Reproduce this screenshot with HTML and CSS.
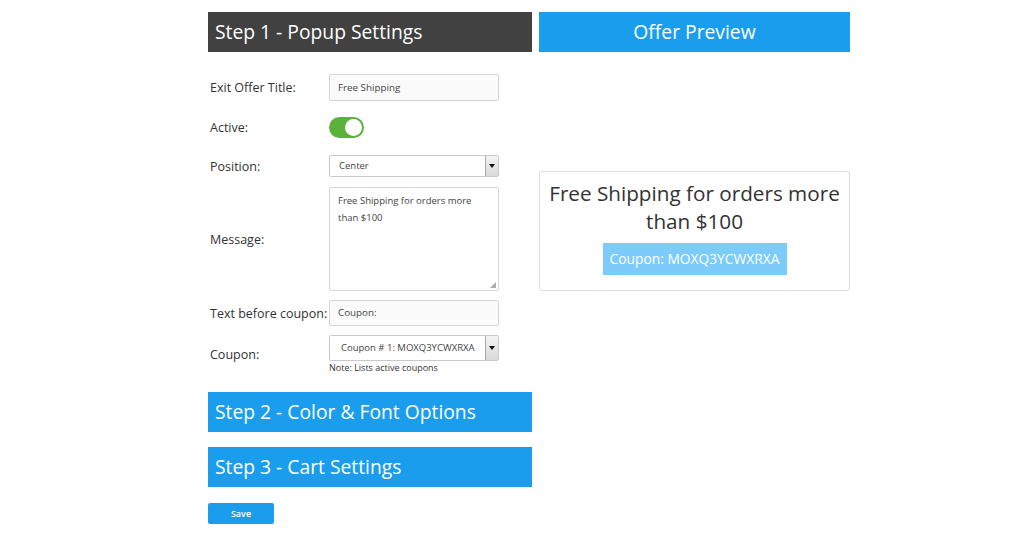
FILE: index.html
```html
<!DOCTYPE html>
<html>
<head>
<meta charset="utf-8">
<link rel="stylesheet" href="styles.css">
</head>
<body>
<div class="page">
  <div class="left">
    <div class="step dark">Step 1 - Popup Settings</div>
    <div class="form">
      <div class="row r1">
        <label class="lbl">Exit Offer Title:</label>
        <div class="input">Free Shipping</div>
      </div>
      <div class="row r2">
        <label class="lbl">Active:</label>
        <div class="toggle"><span class="knob"></span></div>
      </div>
      <div class="row r3">
        <label class="lbl">Position:</label>
        <div class="select"><span class="sel-text">Center</span><span class="arrow"><span class="tri"></span></span></div>
      </div>
      <div class="row r4">
        <label class="lbl">Message:</label>
        <div class="textarea">Free Shipping for orders more than $100<span class="grip"></span></div>
      </div>
      <div class="row r5">
        <label class="lbl">Text before coupon:</label>
        <div class="input">Coupon:</div>
      </div>
      <div class="row r6">
        <label class="lbl">Coupon:</label>
        <div class="ctl">
          <div class="select tall"><span class="sel-text pad">Coupon # 1: MOXQ3YCWXRXA</span><span class="arrow"><span class="tri"></span></span></div>
          <div class="note">Note: Lists active coupons</div>
        </div>
      </div>
    </div>
    <div class="step blue s2">Step 2 - Color &amp; Font Options</div>
    <div class="step blue s3">Step 3 - Cart Settings</div>
    <button class="save">Save</button>
  </div>
  <div class="right">
    <div class="step blue center">Offer Preview</div>
    <div class="preview">
      <div class="ptext">Free Shipping for orders more than $100</div>
      <div class="coupon">Coupon: MOXQ3YCWXRXA</div>
    </div>
  </div>
</div>
</body>
</html>
```

FILE: styles.css
```css
* { box-sizing: border-box; }
body {
  margin: 0;
  background: #fff;
  font-family: "Open Sans", "Noto Sans", sans-serif;
  color: #333;
}
.page {
  display: flex;
  gap: 7px;
  padding: 12px 0 0 208px;
}
.left { width: 324px; display: flex; flex-direction: column; }
.right { width: 311px; display: flex; flex-direction: column; }

.step {
  height: 40px;
  line-height: 40px;
  padding-left: 7px;
  font-size: 19.3px;
  color: #fff;
  white-space: nowrap;
}
.step.dark { background: #414141; }
.step.blue { background: #1b9ded; }
.step.center { text-align: center; padding-left: 0; }
.s2 { margin-top: 18px; }
.s3 { margin-top: 15px; }

.form { display: flex; flex-direction: column; padding-top: 22px; }
.row { display: flex; align-items: center; }
.r2 { margin-top: 16px; }
.r3 { margin-top: 17px; }
.r4 { margin-top: 10px; }
.r5 { margin-top: 9px; }
.r6 { margin-top: 9px; align-items: flex-start; }
.lbl {
  width: 121px;
  padding-left: 2px;
  font-size: 12.5px;
  color: #333;
  white-space: nowrap;
}
.r6 .lbl { padding-top: 11px; }

.input {
  width: 170px;
  height: 27px;
  border: 1px solid #d6d6d6;
  border-radius: 2px;
  background: #fafafa;
  font-size: 9.8px;
  line-height: 25px;
  padding-left: 8px;
  color: #444;
}
.r5 .input { height: 26px; line-height: 24px; }

.toggle {
  width: 35px;
  height: 21px;
  border-radius: 11px;
  background: #5bb13a;
  display: flex;
  align-items: center;
  justify-content: flex-end;
  padding-right: 2px;
}
.knob {
  width: 17px;
  height: 17px;
  border-radius: 50%;
  background: #fff;
}

.select {
  width: 170px;
  height: 22px;
  border: 1px solid #c9c9c9;
  border-radius: 2px;
  background: #fff;
  display: flex;
  align-items: stretch;
}
.select.tall { height: 26px; }
.sel-text {
  flex: 1;
  font-size: 9.5px;
  line-height: 20px;
  padding-left: 9px;
  color: #444;
}
.select.tall .sel-text { line-height: 24px; }
.sel-text.pad { padding-left: 11px; }
.arrow {
  width: 13px;
  border-left: 1px solid #a9a9a9;
  background: linear-gradient(#f4f4f4, #d9d9d9);
  display: flex;
  align-items: center;
  justify-content: center;
}
.tri {
  width: 0; height: 0;
  border-left: 3.5px solid transparent;
  border-right: 3.5px solid transparent;
  border-top: 4px solid #111;
}

.textarea {
  position: relative;
  width: 170px;
  height: 104px;
  border: 1px solid #d6d6d6;
  border-radius: 2px;
  background: #fff;
  font-size: 9.5px;
  line-height: 17px;
  padding: 4px 4px 0 8px;
  color: #444;
}
.grip {
  position: absolute;
  right: 2px;
  bottom: 2px;
  width: 6px;
  height: 6px;
  background:
    radial-gradient(circle, #aaa 0.7px, transparent 1px) 0 0 / 2px 2px;
  clip-path: polygon(100% 0, 100% 100%, 0 100%);
}

.ctl { display: flex; flex-direction: column; }
.note {
  font-size: 9px;
  line-height: 12px;
  color: #333;
  padding-left: 0;
  margin-top: 1px;
}

.save {
  margin-top: 16px;
  width: 66px;
  height: 21px;
  border: none;
  border-radius: 2px;
  background: #1b9ded;
  color: #fff;
  font-family: "Open Sans", sans-serif;
  font-size: 9px;
  font-weight: 600;
  padding: 0;
  cursor: pointer;
}

.preview {
  margin-top: 119px;
  height: 120px;
  border: 1px solid #ddd;
  border-radius: 3px;
  display: flex;
  flex-direction: column;
  align-items: center;
  padding-top: 7px;
}
.ptext {
  font-size: 20.7px;
  line-height: 28px;
  text-align: center;
  color: #333;
  padding: 0 6px;
}
.coupon {
  margin-top: 8px;
  width: 184px;
  height: 32px;
  line-height: 32px;
  text-align: center;
  background: #7ccbfa;
  color: #fff;
  font-size: 13.8px;
}
```
